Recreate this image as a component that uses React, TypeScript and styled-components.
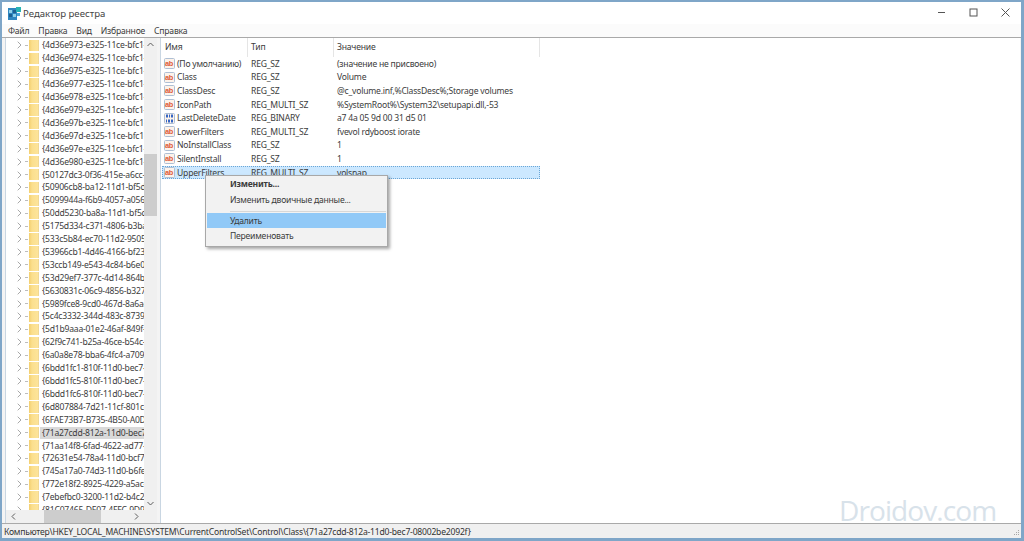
import React from 'react'
import styled, { createGlobalStyle } from 'styled-components'

const GlobalStyle = createGlobalStyle`
  html, body { margin: 0; padding: 0; height: 100%; background: #fff; overflow: hidden; }
  #root { height: 100%; }
  * { box-sizing: border-box; }
`

const Window = styled.div`
  position: relative;
  width: 1024px;
  height: 541px;
  display: flex;
  flex-direction: column;
  background: #fff;
  border: solid #7fa6c8;
  border-width: 2px 3px 3px 2px;
  font-family: 'Noto Sans', 'Open Sans', sans-serif;
  font-size: 8.6px;
  letter-spacing: -0.22px;
  color: #3c3c3c;
  overflow: hidden;
`

const TitleBar = styled.div`
  height: 22px;
  flex: none;
  display: flex;
  align-items: center;
  padding: 0 0 0 6px;
  background: #fff;
`

const AppTitle = styled.span`
  margin-left: 2px;
  font-size: 9.6px;
  letter-spacing: 0;
  color: #444;
`

const WindowControls = styled.div`
  margin-left: auto;
  display: flex;
  align-items: center;
  gap: 23px;
  padding: 0 11px 2px 0;
  color: #555;
`

const MenuBar = styled.div`
  height: 13px;
  flex: none;
  display: flex;
  align-items: center;
  gap: 9px;
  padding-left: 6px;
  background: #fbfbfb;
`

const Panes = styled.div`
  flex: 1;
  min-height: 0;
  display: flex;
  border-top: 1px solid #a9a9a9;
  background: #f4f4f4;
`

const TreePane = styled.div`
  width: 152px;
  margin-left: 3px;
  flex: none;
  display: grid;
  grid-template-columns: 1fr 13px;
  grid-template-rows: 1fr 13px;
  background: #fff;
  border-left: 1px solid #c9d6e2;
`

const TreeRows = styled.div`
  overflow: hidden;
  padding-top: 1px;
`

const TreeRow = styled.div`
  height: 12.91px;
  display: flex;
  align-items: center;
  padding-left: 11px;
`

const Chevron = styled.svg`
  width: 5px;
  height: 8px;
  flex: none;
  color: #a8a8a8;
`

const Dash = styled.span`
  width: 3px;
  height: 1px;
  margin: 0 1px 0 3px;
  flex: none;
  background: #bdbdbd;
`

const Folder = styled.span`
  width: 10px;
  height: 11.5px;
  flex: none;
  background: linear-gradient(90deg, #f3cf6f 0, #fbdf8e 35%, #fde49a 100%);
  border-right: 1px solid #f0d894;
`

const GuidLabel = styled.span<{ $selected?: boolean }>`
  flex: 1;
  min-width: 0;
  height: 12px;
  line-height: 12px;
  margin-left: 1px;
  padding-left: 2px;
  white-space: nowrap;
  overflow: hidden;
  background: ${p => (p.$selected ? '#d9d9d9' : 'transparent')};
`

const VScroll = styled.div`
  display: flex;
  flex-direction: column;
  align-items: center;
  background: #f0f0f0;
  color: #5c5c5c;
`

const ScrollEnd = styled.svg`
  width: 7px;
  height: 5px;
  margin: 4px 0;
  flex: none;
`

const VTrack = styled.div`
  flex: 1;
  width: 100%;
  padding-top: 103px;
`

const VThumb = styled.div`
  height: 62px;
  width: 100%;
  background: #cdcdcd;
`

const HScroll = styled.div`
  display: flex;
  align-items: center;
  background: #f0f0f0;
  color: #5c5c5c;
`

const HArrow = styled.svg`
  width: 5px;
  height: 7px;
  margin: 0 5px;
  flex: none;
`

const HTrack = styled.div`
  flex: 1;
  height: 100%;
  padding-left: 23px;
`

const HThumb = styled.div`
  width: 57px;
  height: 100%;
  background: #cdcdcd;
`

const Corner = styled.div`
  background: #f0f0f0;
`

const ListPane = styled.div`
  flex: 1;
  margin-left: 3px;
  margin-right: 1px;
  padding-left: 1px;
  background: #fff;
  border-left: 1px solid #c9d6e2;
`

const Columns = '86px 86px 206px'

const ListHeader = styled.div`
  height: 19px;
  width: 378px;
  display: grid;
  grid-template-columns: ${Columns};
  align-items: center;
`

const HeaderCell = styled.div`
  height: 100%;
  display: flex;
  align-items: center;
  padding: 0 0 2px 3px;
  border-right: 1px solid #e5e5e5;
`

const ValueRow = styled.div<{ $selected?: boolean }>`
  height: 13.6px;
  width: 378px;
  display: grid;
  grid-template-columns: ${Columns};
  align-items: center;
  white-space: nowrap;
  background: ${p => (p.$selected ? '#cce8ff' : 'transparent')};
  outline: ${p => (p.$selected ? '1px dotted #6aa6d6' : 'none')};
  outline-offset: -1px;
`

const NameCell = styled.div`
  display: flex;
  align-items: center;
  gap: 2px;
  padding-left: 2px;
`

const TextCell = styled.div`
  padding-left: 3px;
  overflow: hidden;
`

const StatusBar = styled.div`
  height: 15px;
  flex: none;
  display: flex;
  align-items: center;
  padding: 2px 0 0 2px;
  background: #f0f0f0;
  border-top: 1px solid #a9a9a9;
  color: #333;
`

const Grip = styled.svg`
  margin-left: auto;
  margin-right: 1px;
  margin-top: 2px;
`

const ContextMenu = styled.div`
  position: absolute;
  left: 203px;
  top: 173px;
  width: 183px;
  height: 72px;
  padding: 2px 1px;
  display: flex;
  flex-direction: column;
  background: #f2f2f2;
  border: 1px solid #a8a8a8;
  box-shadow: 2px 2px 3px rgba(0, 0, 0, 0.35);
`

const MenuItem = styled.div<{ $active?: boolean; $bold?: boolean; $height: number }>`
  height: ${p => p.$height}px;
  flex: none;
  display: flex;
  align-items: center;
  padding-left: 23px;
  font-weight: ${p => (p.$bold ? 700 : 400)};
  background: ${p => (p.$active ? '#91c9f7' : 'transparent')};
`

const Separator = styled.div`
  height: 1px;
  flex: none;
  margin: 1px 0 1px 23px;
  background: #d7d7d7;
`

const Watermark = styled.div`
  position: absolute;
  left: 837px;
  top: 489px;
  font-family: 'Open Sans', sans-serif;
  font-size: 28px;
  letter-spacing: -0.9px;
  color: #d8e2ea;
`

const GUIDS = [
  '{4d36e973-e325-11ce-bfc1-08002be10318}',
  '{4d36e974-e325-11ce-bfc1-08002be10318}',
  '{4d36e975-e325-11ce-bfc1-08002be10318}',
  '{4d36e977-e325-11ce-bfc1-08002be10318}',
  '{4d36e978-e325-11ce-bfc1-08002be10318}',
  '{4d36e979-e325-11ce-bfc1-08002be10318}',
  '{4d36e97b-e325-11ce-bfc1-08002be10318}',
  '{4d36e97d-e325-11ce-bfc1-08002be10318}',
  '{4d36e97e-e325-11ce-bfc1-08002be10318}',
  '{4d36e980-e325-11ce-bfc1-08002be10318}',
  '{50127dc3-0f36-415e-a6cc-4cb3be910b65}',
  '{50906cb8-ba12-11d1-bf5d-0000f805f530}',
  '{5099944a-f6b9-4057-a056-8c550228544c}',
  '{50dd5230-ba8a-11d1-bf5d-0000f805f530}',
  '{5175d334-c371-4806-b3ba-71fd53c9258d}',
  '{533c5b84-ec70-11d2-9505-00c04f79deaf}',
  '{53966cb1-4d46-4166-bf23-c522403cd495}',
  '{53ccb149-e543-4c84-b6e0-bce4f6b7e806}',
  '{53d29ef7-377c-4d14-864b-eb3a85769359}',
  '{5630831c-06c9-4856-b327-f5d32586e060}',
  '{5989fce8-9cd0-467d-8a6a-5419e31529d4}',
  '{5c4c3332-344d-483c-8739-259e934c9cc8}',
  '{5d1b9aaa-01e2-46af-849f-272b3f324c46}',
  '{62f9c741-b25a-46ce-b54c-9bccce08b6f2}',
  '{6a0a8e78-bba6-4fc4-a709-1e33cd09d67e}',
  '{6bdd1fc1-810f-11d0-bec7-08002be2092f}',
  '{6bdd1fc5-810f-11d0-bec7-08002be2092f}',
  '{6bdd1fc6-810f-11d0-bec7-08002be2092f}',
  '{6d807884-7d21-11cf-801c-08002be10318}',
  '{6FAE73B7-B735-4B50-A0DA-2922C4C6E2D6}',
  '{71a27cdd-812a-11d0-bec7-08002be2092f}',
  '{71aa14f8-6fad-4622-ad77-92bb9d7e6947}',
  '{72631e54-78a4-11d0-bcf7-00aa00b7b32a}',
  '{745a17a0-74d3-11d0-b6fe-00a0c90f57da}',
  '{772e18f2-8925-4229-a5ac-6453cb482fda}',
  '{7ebefbc0-3200-11d2-b4c2-00a0c9697d07}',
  '{81C07465-DE07-4FFC-9D9C-000000000000}',
]

const SELECTED_GUID = '{71a27cdd-812a-11d0-bec7-08002be2092f}'

const VALUES = [
  { name: '(По умолчанию)', type: 'REG_SZ', value: '(значение не присвоено)', binary: false },
  { name: 'Class', type: 'REG_SZ', value: 'Volume', binary: false },
  { name: 'ClassDesc', type: 'REG_SZ', value: '@c_volume.inf,%ClassDesc%;Storage volumes', binary: false },
  { name: 'IconPath', type: 'REG_MULTI_SZ', value: '%SystemRoot%\\System32\\setupapi.dll,-53', binary: false },
  { name: 'LastDeleteDate', type: 'REG_BINARY', value: 'a7 4a 05 9d 00 31 d5 01', binary: true },
  { name: 'LowerFilters', type: 'REG_MULTI_SZ', value: 'fvevol rdyboost iorate', binary: false },
  { name: 'NoInstallClass', type: 'REG_SZ', value: '1', binary: false },
  { name: 'SilentInstall', type: 'REG_SZ', value: '1', binary: false },
  { name: 'UpperFilters', type: 'REG_MULTI_SZ', value: 'volsnap', binary: false },
]

const RegeditIcon = () => (
  <svg width="13" height="13" viewBox="0 0 13 13">
    <rect x="0" y="1" width="9" height="12" fill="#2f86c0" />
    <rect x="1" y="3" width="3" height="3" fill="#8fd0ea" />
    <rect x="5" y="3" width="3" height="3" fill="#1d5f8f" />
    <rect x="1" y="7" width="3" height="3" fill="#1d5f8f" />
    <rect x="5" y="7" width="3" height="3" fill="#8fd0ea" />
    <rect x="8" y="0" width="5" height="5" fill="#28b4b4" />
    <rect x="9" y="6" width="3" height="3" fill="#4aa5d8" />
  </svg>
)

const ValueIcon = ({ binary }: { binary: boolean }) => (
  <svg width="11" height="11" viewBox="0 0 11 11" style={{ flex: 'none' }}>
    <rect x="0.5" y="0.5" width="10" height="10" rx="1" fill="#fdf3ea" stroke="#aebfd4" />
    {binary ? (
      <path
        d="M2 1.5h2v3H2zM5 1.5h1v3H5zM7 1.5h2v3H7zM2 6.5h1v3H2zM4 6.5h2v3H4zM7 6.5h2v3H7z"
        fill="#3566c4"
      />
    ) : (
      <text x="0.9" y="7.6" fontSize="7.4" fontWeight="700" fontFamily="'Liberation Sans', sans-serif" fill="#dc5a38">
        ab
      </text>
    )}
  </svg>
)

const App: React.FC = () => (
  <>
    <GlobalStyle />
    <Window>
      <TitleBar>
        <RegeditIcon />
        <AppTitle>Редактор реестра</AppTitle>
        <WindowControls>
          <svg width="9" height="9" viewBox="0 0 9 9">
            <path d="M1 4.5h7" stroke="currentColor" fill="none" />
          </svg>
          <svg width="9" height="9" viewBox="0 0 9 9">
            <rect x="1" y="1" width="7" height="7" stroke="currentColor" fill="none" />
          </svg>
          <svg width="9" height="9" viewBox="0 0 9 9">
            <path d="M.5.5l8 8M8.5.5l-8 8" stroke="currentColor" fill="none" />
          </svg>
        </WindowControls>
      </TitleBar>
      <MenuBar>
        <span>Файл</span>
        <span>Правка</span>
        <span>Вид</span>
        <span>Избранное</span>
        <span>Справка</span>
      </MenuBar>
      <Panes>
        <TreePane>
          <TreeRows>
            {GUIDS.map(guid => (
              <TreeRow key={guid}>
                <Chevron viewBox="0 0 5 8">
                  <path d="M.7.7 4 4 .7 7.3" stroke="currentColor" fill="none" />
                </Chevron>
                <Dash />
                <Folder />
                <GuidLabel $selected={guid === SELECTED_GUID}>{guid}</GuidLabel>
              </TreeRow>
            ))}
          </TreeRows>
          <VScroll>
            <ScrollEnd viewBox="0 0 7 5">
              <path d="M.5 4 3.5 1l3 3" stroke="currentColor" fill="none" />
            </ScrollEnd>
            <VTrack>
              <VThumb />
            </VTrack>
            <ScrollEnd viewBox="0 0 7 5">
              <path d="M.5 1l3 3 3-3" stroke="currentColor" fill="none" />
            </ScrollEnd>
          </VScroll>
          <HScroll>
            <HArrow viewBox="0 0 5 7">
              <path d="M4 .5 1 3.5l3 3" stroke="currentColor" fill="none" />
            </HArrow>
            <HTrack>
              <HThumb />
            </HTrack>
            <HArrow viewBox="0 0 5 7">
              <path d="M1 .5l3 3-3 3" stroke="currentColor" fill="none" />
            </HArrow>
          </HScroll>
          <Corner />
        </TreePane>
        <ListPane>
          <ListHeader>
            <HeaderCell>Имя</HeaderCell>
            <HeaderCell>Тип</HeaderCell>
            <HeaderCell>Значение</HeaderCell>
          </ListHeader>
          {VALUES.map(row => (
            <ValueRow key={row.name} $selected={row.name === 'UpperFilters'}>
              <NameCell>
                <ValueIcon binary={row.binary} />
                {row.name}
              </NameCell>
              <TextCell>{row.type}</TextCell>
              <TextCell>{row.value}</TextCell>
            </ValueRow>
          ))}
        </ListPane>
      </Panes>
      <StatusBar>
        Компьютер\HKEY_LOCAL_MACHINE\SYSTEM\CurrentControlSet\Control\Class\{SELECTED_GUID}
        <Grip width="8" height="8" viewBox="0 0 8 8">
          <path d="M6 1h1v1H6zM4 3h1v1H4zM6 3h1v1H6zM2 5h1v1H2zM4 5h1v1H4zM6 5h1v1H6z" fill="#a8a8a8" />
        </Grip>
      </StatusBar>
      <ContextMenu>
        <MenuItem $bold $height={12}>Изменить...</MenuItem>
        <MenuItem $height={20}>Изменить двоичные данные...</MenuItem>
        <Separator />
        <MenuItem $active $height={15}>Удалить</MenuItem>
        <MenuItem $height={16}>Переименовать</MenuItem>
      </ContextMenu>
      <Watermark>Droidov.com</Watermark>
    </Window>
  </>
)

export default App
